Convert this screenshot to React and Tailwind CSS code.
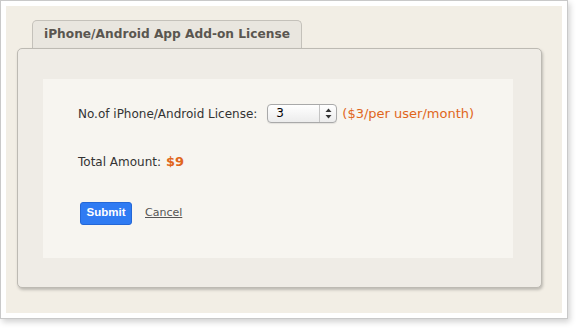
export default function App() {
  return (
    <div className="w-[584px] h-[334px] bg-white" style={{ fontFamily: '"DejaVu Sans", Verdana, sans-serif' }}>
      {/* outer frame */}
      <div className="w-[568px] h-[319px] border border-[#c9c9c9] bg-white p-[5px] shadow-[2px_3px_6px_rgba(0,0,0,0.18)]">
        <div className="h-full bg-[#f2eee5] pt-[14px] pl-[11px]">
          {/* tab */}
          <div className="ml-[15px] w-[270px] h-[28px] rounded-t-[5px] border border-b-0 border-[#c4c1ba] bg-[#e9e6df] flex items-center pl-[11px] text-[12.2px] font-bold text-[#5a5650]">
            iPhone/Android App Add-on License
          </div>
          {/* panel */}
          <div className="w-[525px] h-[240px] rounded-[5px] border border-[#bdbab3] bg-[#efece6] pt-[30px] pl-[25px] shadow-[1px_2px_3px_rgba(0,0,0,0.22)]">
            <div className="w-[470px] h-[179px] bg-[#f7f5f0] pl-[35px] pt-[25px] text-[12px] text-[#333]">
              <div className="flex items-center h-[19px]">
                <span>No.of iPhone/Android License:</span>
                <div className="ml-[10px] w-[70px] h-[19px] rounded-[4px] border border-[#a9a9a9] bg-gradient-to-b from-white to-[#ececec] flex items-stretch shadow-[0_1px_1px_rgba(0,0,0,0.08)]">
                  <span className="flex-1 pl-[8px] text-[12px] leading-[16px] text-black">3</span>
                  <span className="w-[17px] border-l border-[#c4c4c4] flex items-center justify-center">
                    <svg width="7" height="11" viewBox="0 0 7 11">
                      <path d="M3.5 0.5 L6.5 4 L0.5 4 Z" fill="#333" />
                      <path d="M3.5 10.5 L6.5 7 L0.5 7 Z" fill="#333" />
                    </svg>
                  </span>
                </div>
                <span className="ml-[5px] text-[13px] text-[#e0661b]">($3/per user/month)</span>
              </div>
              <div className="mt-[29px] flex items-baseline">
                <span>Total Amount:</span>
                <span className="ml-[5px] text-[13px] font-bold text-[#e0661b]">$9</span>
              </div>
              <div className="mt-[30px] flex items-center">
                <button
                  className="ml-[2px] w-[52px] h-[23px] rounded-[3px] border border-[#2467d6] bg-[#2f7bf3] text-white text-[11.5px] font-bold"
                  style={{ fontFamily: '"Liberation Sans", Arial, sans-serif' }}
                >
                  Submit
                </button>
                <a className="ml-[13px] text-[11px] text-[#555] underline">Cancel</a>
              </div>
            </div>
          </div>
        </div>
      </div>
    </div>
  );
}
